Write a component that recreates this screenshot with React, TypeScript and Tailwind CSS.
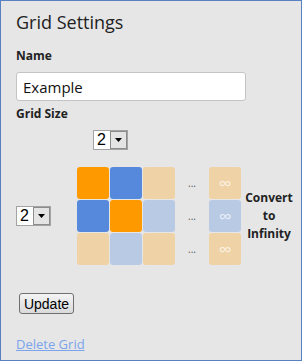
const ORANGE = "bg-[#fe9a00]"
const BLUE = "bg-[#5689dc]"
const TAN = "bg-[#efd2a5]"
const PALE = "bg-[#b9cae5]"

const rows = [
  [ORANGE, BLUE, TAN, TAN],
  [BLUE, ORANGE, PALE, PALE],
  [TAN, PALE, TAN, TAN],
]

const SizeSelect = () => {
  return (
    <div className="flex h-[20px] w-[35px] border border-[#a3a3a3] bg-white">
      <span className="flex-1 pl-[3px] font-['Liberation_Sans',sans-serif] text-[16px] leading-[18px] text-black">2</span>
      <div className="flex w-[17px] items-center justify-center border border-[#8c8c8c] bg-[#e4e4e4]">
        <svg width="7" height="4" viewBox="0 0 7 4">
          <path d="M0 0h7L3.5 4z" fill="#000" />
        </svg>
      </div>
    </div>
  )
}

const Cell = ({ color, infinity }: { color: string; infinity?: boolean }) => {
  return (
    <div className={`flex h-[32px] w-[32px] items-center justify-center rounded-[3px] ${color}`}>
      {infinity && <span className="text-[18px] leading-none text-white/70">∞</span>}
    </div>
  )
}

const App = () => {
  return (
    <div className="h-[361px] w-[302px] border border-[#5682c2] bg-[#e6e6e6] pl-[15px] font-['Open_Sans',sans-serif] text-[#222]">
      <h1 className="mt-[8px] text-[18px] leading-[26px] text-[#222]">Grid Settings</h1>

      <div className="mt-[13px] text-[12px] font-bold leading-[16px]">Name</div>
      <input
        className="mt-[8px] h-[29px] w-[230px] rounded-[3px] border border-[#c4c4c4] bg-white px-[6px] text-[15px] text-[#111] outline-none"
        defaultValue="Example"
      />
      <div className="mt-[5px] text-[12px] font-bold leading-[16px]">Grid Size</div>

      <div className="ml-[77px] mt-[8px]">
        <SizeSelect />
      </div>

      <div className="mt-[17px] flex items-center">
        <div className="w-[61px]">
          <SizeSelect />
        </div>
        <div className="flex flex-col gap-[1px]">
          {rows.map((row, i) => (
            <div key={i} className="flex items-center">
              <div className="flex gap-[1px]">
                <Cell color={row[0]} />
                <Cell color={row[1]} />
                <Cell color={row[2]} />
              </div>
              <span className="w-[34px] text-center text-[10px] leading-none text-[#555]">...</span>
              <Cell color={row[3]} infinity />
            </div>
          ))}
        </div>
        <div className="w-[56px] text-center text-[12px] font-bold leading-[18px] text-[#222]">
          Convert
          <br />
          to
          <br />
          Infinity
        </div>
      </div>

      <button className="ml-[3px] mt-[28px] h-[21px] w-[55px] rounded-[3px] border border-[#707070] bg-gradient-to-b from-[#f4f4f4] to-[#dadada] font-['Liberation_Sans',sans-serif] text-[14px] leading-none text-black">
        Update
      </button>

      <div className="mt-[16px]">
        <a href="#" className="text-[13px] text-[#7ba4ec] underline">Delete Grid</a>
      </div>
    </div>
  )
}

export default App
